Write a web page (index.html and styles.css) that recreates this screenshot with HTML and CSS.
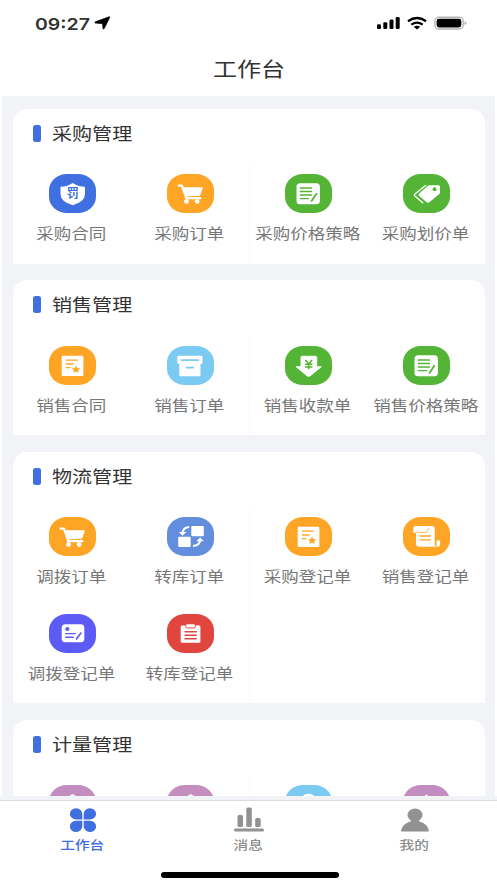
FILE: index.html
```html
<!DOCTYPE html>
<html lang="zh-CN">
<head>
<meta charset="utf-8">
<title>工作台</title>
<link rel="stylesheet" href="styles.css">
</head>
<body>
<svg class="sprite" width="0" height="0" aria-hidden="true">
  <symbol id="shield" viewBox="0 0 47 39">
    <path fill="#fff" d="M23.7 9q5 3.600 12.300 3.700v7.300q0 7.500-12.300 11.300Q11.500 27.500 11.500 20v-7.300Q18.700 12.600 23.700 9z"/>
  </symbol>
  <symbol id="cart" viewBox="0 0 47 39">
    <path fill="none" stroke="#fff" stroke-width="2.200" stroke-linecap="round" stroke-linejoin="round" d="M11.600 11.600h3.400l4.300 12.600h14"/>
    <path fill="#fff" stroke="#fff" stroke-linejoin="round" d="M16.300 13.800h19l-2.600 7.500-14 .6z"/>
    <circle cx="19.500" cy="27.500" r="2.400" fill="#fff"/><circle cx="30.200" cy="27.500" r="2.400" fill="#fff"/>
  </symbol>
  <symbol id="edit" viewBox="0 0 47 39">
    <rect x="11.500" y="9.300" width="23.400" height="20.900" rx="3.500" fill="#fff"/>
    <path stroke="currentColor" stroke-width="1.400" stroke-linecap="round" d="M15.300 14h11.200M15.300 17.500h11.200M15.300 21h11.200M15.300 24.600h8.300"/>
    <path stroke="currentColor" stroke-width="1.800" d="M31.700 19.200l-5.500 8.200"/>
  </symbol>
  <symbol id="tag" viewBox="0 0 47 39">
    <path fill="#fff" fill-rule="evenodd" d="M25.500 11.200h9.700q1.800 0 1.800 1.600v5.700q0 1-1 1.800l-9.300 7.700q-1.700 1.300-3.300 0l-7.200-6q-1.500-1.300 0-2.500zM31.500 13.300a2 2 0 1 0 0 4 2 2 0 0 0 0-4z"/>
    <path fill="none" stroke="#fff" stroke-width="1.400" stroke-linejoin="round" stroke-linecap="round" d="M22.500 11.500L11.700 20.300q-.7.700 0 1.400l8 7"/>
  </symbol>
  <symbol id="star" viewBox="0 0 47 39">
    <rect x="12.700" y="9.700" width="21.700" height="20.300" rx="1.200" fill="#fff"/>
    <path stroke="currentColor" stroke-width="1.300" stroke-linecap="round" d="M17.300 14.200h11M17.300 18h6.800M17.300 21.600h3.800"/>
    <path fill="currentColor" d="M27 19.600l1.200 2.500 3 .3-2.200 1.900.6 2.700-2.600-1.400-2.600 1.400.6-2.700-2.200-1.900 3-.3z"/>
  </symbol>
  <symbol id="box" viewBox="0 0 47 39">
    <path fill="#fff" d="M11.300 9.800h23.200q1 0 1 1v6q0 1-1 1h-1v11.500q0 1-1 1H13.300q-1 0-1-1V17.800h-1q-1 0-1-1v-6q0-1 1-1z"/>
    <path stroke="currentColor" stroke-width="1.600" stroke-linecap="round" d="M14.500 14.100h17M19.300 21.600h7"/>
  </symbol>
  <symbol id="income" viewBox="0 0 47 39">
    <path fill="#fff" stroke="#fff" stroke-width="1" stroke-linejoin="round" d="M17 10.300h13.700q1 0 1 1v9.500h4.500L25.200 29.800q-1.600 1.100-3.200 0L11.200 20.800H16v-9.500q0-1 1-1z"/>
    <path fill="none" stroke="currentColor" stroke-width="1.500" d="M20.300 14l3.400 4 3.400-4M20 18.300h7.400M20 21h7.400M23.700 18v5.300"/>
  </symbol>
  <symbol id="swap" viewBox="0 0 47 39">
    <rect x="24.300" y="9" width="12.500" height="10.200" rx="1" fill="#fff"/><rect x="11.200" y="19.700" width="12.500" height="10.300" rx="1" fill="#fff"/>
    <path fill="none" stroke="#fff" stroke-width="2.200" d="M22.200 10q-5.700.4-6.600 5.500M26 29q6-.5 7-5"/>
    <path fill="#fff" d="M11.800 15h7.600l-4 3.700zM29.200 24.200h7.700l-3.800-3.700z"/>
  </symbol>
  <symbol id="scroll" viewBox="0 0 47 39">
    <path fill="#fff" d="M13 9h16q2.700 0 2.700 2.500v15q0 3.200 3 3.200H16.200q-3.200 0-3.200-3V16h-2q-.8 0-.8-1v-3q0-3 2.800-3z"/>
    <path fill="none" stroke="currentColor" stroke-width=".8" d="M12.500 15.300h10.300q1.500 0 1.500-1.500 0-2 2-2.500"/>
    <path stroke="currentColor" stroke-width="1.300" stroke-linecap="round" d="M17 19h10.500M17 22.800h10.500"/>
    <path fill="#fff" d="M33.500 23.500h3.600v4.200q0 2-2.300 2-1.300 0-1.300-2z"/>
  </symbol>
  <symbol id="card" viewBox="0 0 47 39">
    <rect x="12.700" y="10.300" width="22.600" height="17.900" rx="3.500" fill="#fff"/><circle cx="18.300" cy="15" r="2.100" fill="currentColor"/>
    <path stroke="currentColor" stroke-width="1.400" stroke-linecap="round" d="M16.700 19.600h9.500M16.700 23.300h7.500"/>
    <path stroke="currentColor" stroke-width="1.700" d="M32.300 18.500l-5.300 7"/>
  </symbol>
  <symbol id="clip" viewBox="0 0 47 39">
    <rect x="13.700" y="11.500" width="19.700" height="17.300" rx="1.300" fill="#fff"/>
    <rect x="18.700" y="9.700" width="9.700" height="4.200" rx="1.500" fill="#fff" stroke="currentColor" stroke-width="1"/>
    <path stroke="currentColor" stroke-width="1.400" stroke-linecap="round" d="M18 17.700h11.300M18 21.200h11.300M18 24.700h11.300"/>
  </symbol>
  <symbol id="round" viewBox="0 0 47 39"><ellipse cx="23.500" cy="18" rx="9" ry="9.300" fill="#fff"/></symbol>
  <symbol id="peak" viewBox="0 0 47 39"><path fill="#fff" d="M23.500 9.500l11 9-11 10-11-10z"/></symbol>
</svg>

<header class="status">
  <span class="time">09:27</span>
  <svg class="locate" width="17" height="14" viewBox="0 0 17 14"><path stroke="#000" stroke-width=".7" stroke-linejoin="round" d="M1.400 5.800L15 .8q1.200-.3.700.8L10.200 12.500q-.8 1.200-1.200 0L8.600 7.700 1.400 7Q0 6.500 1.400 5.800z"/></svg>
  <svg class="signals" width="92" height="16" viewBox="0 0 92 16">
    <rect x="1" y="8.300" width="4" height="4.700" rx="1.300"/><rect x="7.300" y="6.200" width="4" height="6.800" rx="1.300"/><rect x="13.500" y="3.600" width="4" height="9.400" rx="1.300"/><rect x="19.700" y="1" width="4" height="12" rx="1.300"/>
    <g fill="none" stroke="#000" stroke-width="2.300"><path d="M32 5.300q9-6.500 18 0M35.300 8.600q5.700-4 11.400 0"/></g><path d="M37.700 10.700q3.300-2 6.600 0L41 13.400z"/>
    <rect x="58.800" y="1.200" width="28.400" height="11.800" rx="4" fill="none" stroke="#b5b5b5" stroke-width="1.400"/><rect x="60.600" y="2.800" width="24.700" height="8.600" rx="2.400"/><path fill="#b5b5b5" d="M88.500 5.200q2.200.3 2.200 1.900t-2.200 1.900z"/>
  </svg>
</header>
<h1 class="title"><span class="wide">工作台</span></h1>

<main class="content">
  <section class="panel">
    <h2><span>采购管理</span></h2>
    <div class="grid">
      <div class="cell"><svg class="icon blue" viewBox="0 0 47 39"><use href="#shield"/><text class="glyph" x="23.700" y="23.800" text-anchor="middle">罚</text></svg><span class="wide">采购合同</span></div>
      <div class="cell"><svg class="icon orange"><use href="#cart"/></svg><span class="wide">采购订单</span></div>
      <div class="cell"><svg class="icon green"><use href="#edit"/></svg><span class="wide">采购价格策略</span></div>
      <div class="cell"><svg class="icon green"><use href="#tag"/></svg><span class="wide">采购划价单</span></div>
    </div>
  </section>
  <section class="panel">
    <h2><span>销售管理</span></h2>
    <div class="grid">
      <div class="cell"><svg class="icon orange"><use href="#star"/></svg><span class="wide">销售合同</span></div>
      <div class="cell"><svg class="icon sky"><use href="#box"/></svg><span class="wide">销售订单</span></div>
      <div class="cell"><svg class="icon green"><use href="#income"/></svg><span class="wide">销售收款单</span></div>
      <div class="cell"><svg class="icon green"><use href="#edit"/></svg><span class="wide">销售价格策略</span></div>
    </div>
  </section>
  <section class="panel">
    <h2><span>物流管理</span></h2>
    <div class="grid">
      <div class="cell"><svg class="icon orange"><use href="#cart"/></svg><span class="wide">调拨订单</span></div>
      <div class="cell"><svg class="icon steel"><use href="#swap"/></svg><span class="wide">转库订单</span></div>
      <div class="cell"><svg class="icon orange"><use href="#star"/></svg><span class="wide">采购登记单</span></div>
      <div class="cell"><svg class="icon orange"><use href="#scroll"/></svg><span class="wide">销售登记单</span></div>
      <div class="cell"><svg class="icon violet"><use href="#card"/></svg><span class="wide">调拨登记单</span></div>
      <div class="cell"><svg class="icon red"><use href="#clip"/></svg><span class="wide">转库登记单</span></div>
    </div>
  </section>
  <section class="panel">
    <h2><span>计量管理</span></h2>
    <div class="grid">
      <div class="cell"><svg class="icon mauve"><use href="#shield"/></svg></div>
      <div class="cell"><svg class="icon mauve"><use href="#shield"/></svg></div>
      <div class="cell"><svg class="icon sky"><use href="#round"/></svg></div>
      <div class="cell"><svg class="icon mauve"><use href="#peak"/></svg></div>
    </div>
  </section>
</main>

<nav class="tabs">
  <div class="tab active">
    <svg width="30" height="26" viewBox="0 0 30 26"><path d="M14.300 12.500H8A6.200 5.600 0 1 1 14.300 7zM15.700 12.500H22A6.200 5.600 0 1 0 15.700 7zM14.300 13.800H8A6.200 5.600 0 1 0 14.300 19.300zM15.700 13.800H22A6.200 5.600 0 1 1 15.700 19.300z"/></svg>
    <span class="wide">工作台</span>
  </div>
  <div class="tab">
    <svg width="30" height="26" viewBox="0 0 30 26"><rect x="3.500" y="8" width="5.500" height="12" rx="1.500"/><rect x="12.300" y="0.500" width="5.500" height="19.500" rx="1.500"/><rect x="21.200" y="11" width="5.500" height="9" rx="1.500"/><rect x="0" y="21.500" width="30" height="3" rx="1.500"/></svg>
    <span class="wide">消息</span>
  </div>
  <div class="tab">
    <svg width="30" height="26" viewBox="0 0 30 26"><ellipse cx="15" cy="8" rx="7.500" ry="6.500"/><path d="M11 12h8v2.200q8.500 2.500 10 9.300.2 1-1 1H2q-1.200 0-1-1 1.500-6.800 10-9.300z"/></svg>
    <span class="wide">我的</span>
  </div>
</nav>
<footer class="home"><span></span></footer>
</body>
</html>
```

FILE: styles.css
```css
* { box-sizing: border-box; }
body {
  margin: 0;
  width: 497px;
  height: 883px;
  overflow: hidden;
  background: #fff;
  color: #333;
  font-family: "Noto Sans CJK SC", sans-serif;
}
.sprite { display: block; height: 0; }
.glyph { font-size: 12px; font-weight: 700; fill: currentColor; }
.wide { display: block; white-space: nowrap; transform: scaleX(1.2); }

.status { display: flex; align-items: center; height: 46px; padding: 0 29px 0 34.500px; }
.time {
  width: 58px;
  padding-top: 1px;
  font: 600 16.500px/20px Inter, sans-serif;
  transform: scaleX(1.18);
  transform-origin: left;
}
.locate { margin-left: 1px; }
.signals { margin-left: auto; margin-top: 1px; }

.title {
  display: flex;
  align-items: center;
  justify-content: center;
  height: 50px;
  margin: 0;
  padding: 0 0 5px 1px;
  font-size: 20px;
  font-weight: 400;
  line-height: 28px;
}

.content {
  display: flex;
  flex-direction: column;
  gap: 16.300px;
  height: 700px;
  margin: 0 2px;
  padding: 13px 10px 0 11px;
  overflow: hidden;
  background: #f2f3f6;
}
.panel {
  flex: none;
  height: 155px;
  padding-top: 14px;
  border-radius: 14px 14px 0 0;
  background: #fff;
}
.panel:nth-child(3) { height: 251.700px; }
.panel h2 {
  display: flex;
  align-items: center;
  gap: 11px;
  height: 21px;
  margin: 0;
  padding-left: 20px;
  font-size: 17px;
  font-weight: 400;
  line-height: 21px;
}
.panel h2::before { content: ""; width: 8px; height: 17px; border-radius: 2.500px; background: #3f6fe0; }
.panel h2 span { margin-top: -2px; transform: scaleX(1.18); transform-origin: left; }

.grid {
  display: grid;
  grid-template-columns: repeat(4, 118px);
  grid-auto-rows: 97px;
  padding-top: 20px;
  background: linear-gradient(#fafafa, #fafafa) 236px 20px / 1px 100% no-repeat;
}
.panel:nth-child(-n+2) .grid { height: 120px; }
.panel:nth-child(3) .grid { height: 216.700px; }
.cell {
  display: flex;
  flex-direction: column;
  align-items: center;
  gap: 9px;
  padding-top: 10.300px;
  color: #777;
  font-size: 14.600px;
  line-height: 21px;
}
.cell .wide { margin-left: -1px; }
.icon { flex: none; width: 47px; height: 39px; border-radius: 18px / 16px; }
.blue { color: #3f6fe0; background: #3f6fe0; }
.orange { color: #ffa526; background: #ffa526; }
.green { color: #54b435; background: #54b435; }
.sky { color: #7acaf1; background: #7acaf1; }
.steel { color: #638ede; background: #638ede; }
.violet { color: #5d5bf5; background: #5d5bf5; }
.red { color: #e0463e; background: #e0463e; }
.mauve { color: #c38dc0; background: #c38dc0; }

.tabs {
  display: grid;
  grid-template-columns: repeat(3, 1fr);
  height: 59px;
  border-top: 4px solid #f2f3f6;
  background: linear-gradient(#dcdcdf, #dcdcdf) 0 0 / 100% 1px no-repeat;
}
.tab {
  display: flex;
  flex-direction: column;
  align-items: center;
  padding-top: 7px;
  color: #8d8d8d;
  font-size: 12.200px;
  font-weight: 500;
  line-height: 18px;
}
.tab svg { flex: none; margin-bottom: 3px; fill: #929292; }
.tab .wide { margin-left: -1px; }
.tab:nth-child(n+2) { padding-left: 1px; }
.tab.active { color: #3f6fe0; }
.tab.active svg { fill: #3f6fe0; }
.home { display: flex; justify-content: center; padding: 17px 0 0 2px; }
.home span { width: 178px; height: 6px; border-radius: 3px; background: #000; }
```
